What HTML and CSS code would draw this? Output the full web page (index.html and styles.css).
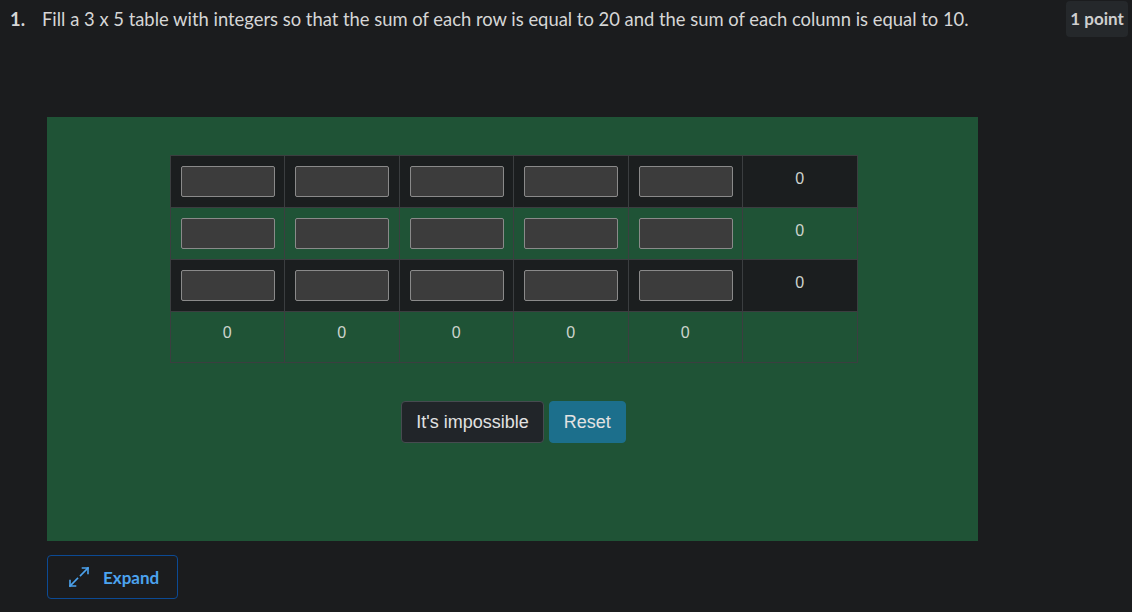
FILE: index.html
```html
<!DOCTYPE html>
<html>
<head>
<meta charset="utf-8">
<link rel="stylesheet" href="styles.css">
</head>
<body>
<div class="question">
  <div class="q-head">
    <span class="q-num">1.</span>
    <span class="q-text">Fill a 3 x 5 table with integers so that the sum of each row is equal to 20 and the sum of each column is equal to 10.</span>
    <span class="q-points">1 point</span>
  </div>
  <div class="panel">
    <table class="grid">
      <tr class="dark">
        <td><input class="cell-input" type="text"></td>
        <td><input class="cell-input" type="text"></td>
        <td><input class="cell-input" type="text"></td>
        <td><input class="cell-input" type="text"></td>
        <td><input class="cell-input" type="text"></td>
        <td class="sum">0</td>
      </tr>
      <tr>
        <td><input class="cell-input" type="text"></td>
        <td><input class="cell-input" type="text"></td>
        <td><input class="cell-input" type="text"></td>
        <td><input class="cell-input" type="text"></td>
        <td><input class="cell-input" type="text"></td>
        <td class="sum">0</td>
      </tr>
      <tr class="dark">
        <td><input class="cell-input" type="text"></td>
        <td><input class="cell-input" type="text"></td>
        <td><input class="cell-input" type="text"></td>
        <td><input class="cell-input" type="text"></td>
        <td><input class="cell-input" type="text"></td>
        <td class="sum">0</td>
      </tr>
      <tr class="totals">
        <td class="sum">0</td>
        <td class="sum">0</td>
        <td class="sum">0</td>
        <td class="sum">0</td>
        <td class="sum">0</td>
        <td class="sum"></td>
      </tr>
    </table>
    <div class="actions">
      <button class="btn btn-dark">It's impossible</button>
      <button class="btn btn-teal">Reset</button>
    </div>
  </div>
  <button class="expand">
    <svg class="expand-icon" width="24" height="24" viewBox="0 0 24 24" fill="none" stroke="currentColor" stroke-width="1.6" stroke-linecap="square">
      <path d="M13.5 10.5 L21 3"/>
      <path d="M15.5 3 H21 V8.5"/>
      <path d="M10.5 13.5 L3 21"/>
      <path d="M3 15.5 V21 H8.5"/>
    </svg>
    <span>Expand</span>
  </button>
</div>
</body>
</html>
```

FILE: styles.css
```css
html, body {
  margin: 0;
  padding: 0;
  background: #1b1c1e;
}
body {
  width: 1132px;
  height: 612px;
  overflow: hidden;
  font-family: Lato, "Open Sans", sans-serif;
  color: #d6d6d6;
}
.question {
  padding: 0 4px 0 10px;
}
.q-head {
  display: flex;
  align-items: flex-start;
  height: 117px;
}
.q-num {
  font-weight: 700;
  font-size: 18.4px;
  width: 32px;
  padding-top: 7px;
  line-height: 24px;
}
.q-text {
  flex: 1;
  font-size: 18.4px;
  line-height: 24px;
  padding-top: 7px;
}
.q-points {
  margin-top: 1px;
  background: #25282b;
  border-radius: 4px;
  font-weight: 700;
  font-size: 17px;
  color: #cfcfcf;
  height: 36px;
  line-height: 36px;
  box-sizing: border-box;
  width: 62px;
  text-align: center;
  white-space: nowrap;
}
.panel {
  margin-left: 37px;
  width: 931px;
  height: 424px;
  background: #1f5336;
  display: flex;
  flex-direction: column;
  align-items: center;
  padding-top: 38px;
  box-sizing: border-box;
}
.grid {
  border-collapse: collapse;
  table-layout: fixed;
  width: 688px;
  margin-left: 2px;
}
.grid td {
  border: 1px solid #3b3e40;
  padding: 10px;
  height: 31px;
  text-align: center;
  font-family: "Liberation Sans", Arial, sans-serif;
  font-size: 16px;
  color: #cdd3cd;
}
.grid td.sum {
  padding-top: 7px;
  padding-bottom: 13px;
}
.grid tr.dark td {
  background: #1b1e1f;
}
.grid tr.totals td {
  height: 30px;
  padding-top: 6px;
  padding-bottom: 14px;
}
.cell-input {
  display: block;
  width: 94px;
  height: 31px;
  box-sizing: border-box;
  background: #3c3c3c;
  border: 1px solid #8a8a8a;
  border-radius: 2px;
  margin: 0;
  padding: 0;
}
.actions {
  display: flex;
  gap: 5px;
  margin-top: 38px;
  margin-left: 2px;
}
.btn {
  font-family: "Liberation Sans", Arial, sans-serif;
  font-size: 18px;
  line-height: 24px;
  padding: 8px 14px;
  border-radius: 4px;
  color: #e2e2e2;
  cursor: pointer;
}
.btn-dark {
  background: #212529;
  border: 1px solid #464b50;
}
.btn-teal {
  background: #1c6f8c;
  border: 1px solid #1c6f8c;
}
.expand {
  margin-top: 14px;
  margin-left: 37px;
  width: 131px;
  height: 44px;
  box-sizing: border-box;
  background: transparent;
  border: 1px solid #0c4a94;
  border-radius: 4px;
  display: flex;
  align-items: center;
  padding: 0 0 0 19px;
  gap: 12px;
  color: #4ca3ef;
  font-family: Lato, "Open Sans", sans-serif;
  font-weight: 700;
  font-size: 17px;
}
.expand-icon {
  color: #4ca3ef;
}
```
